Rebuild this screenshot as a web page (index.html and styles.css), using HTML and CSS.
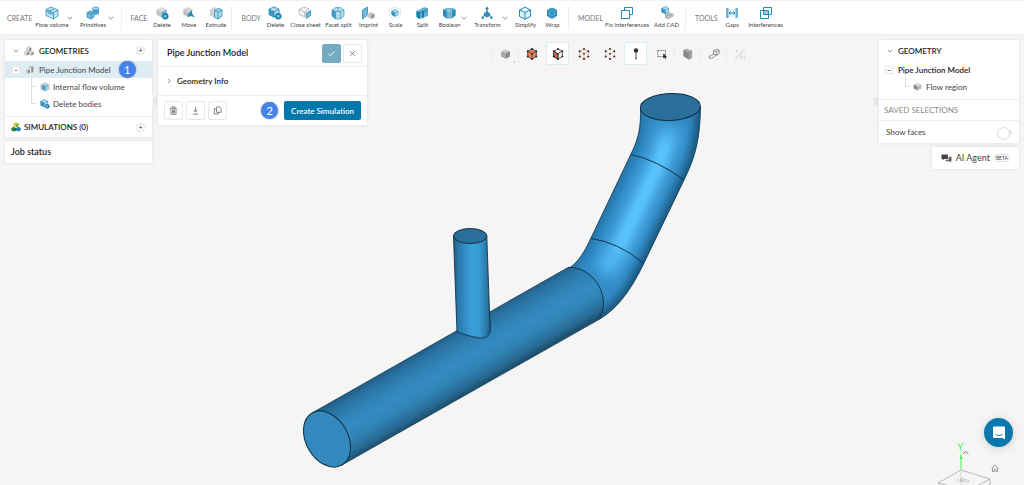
FILE: index.html
```html
<!DOCTYPE html>
<html lang="en">
<head>
<meta charset="utf-8">
<title>Pipe Junction Model</title>
<link rel="stylesheet" href="styles.css">
</head>
<body>
<svg class="defs" aria-hidden="true">
  <defs>
    <symbol id="cube" viewBox="0 0 12 12"><path d="M6 .8 11 3.2v5.4L6 11.2 1 8.6V3.2z" fill="#b9dcec"/><path d="M1 3.2 6 5.7v5.5L1 8.6z" fill="#3d9cc4"/><path d="M6 .8 11 3.2v5.4L6 11.2 1 8.6V3.2zM1 3.2 6 5.7l5-2.5M6 5.7v5.5" fill="none" stroke="#2389b5" stroke-width=".8"/></symbol>
    <symbol id="volume" viewBox="0 0 12 12"><path d="M6 .3 11.500 3v6L6 11.700.500 9V3z" fill="#c9cdd0"/><path d="m6 2 3.800 1.900v4.300L6 10.100 2.200 8.200V3.900z" fill="#9ccfe4"/><path d="M2.200 3.900 6 5.800v4.300L2.200 8.200z" fill="#4da5ca"/><path d="M2.200 3.900 6 5.800l3.800-1.900M6 5.800v4.300" fill="none" stroke="#2389b5" stroke-width=".6"/></symbol>
    <symbol id="cube-gray" viewBox="0 0 12 12"><path d="M6 .8 11 3.2v5.4L6 11.2 1 8.6V3.2z" fill="#dcdcdc"/><path d="M6 5.7 11 3.2v5.4l-5 2.6z" fill="#bcbcbc"/><path d="M1 3.2 6 5.7v5.5L1 8.6z" fill="#8c8c8c"/></symbol>
    <symbol id="chev" viewBox="0 0 6 6"><path d="M.8 1.8 3 4.2l2.2-2.4" fill="none" stroke="#777" stroke-width=".8"/></symbol>
    <symbol id="flow" viewBox="0 0 14 14"><path d="M1 3.5 6 1l7 3v6l-4.500 3L1 9.500z" fill="#c4e2ef" stroke="#3394bd" stroke-width=".8"/><path d="M1 3.500 8.500 6.800 13 4M8.500 6.800V13M3.500 5.500 9 3M3 7l3.500 1.500" fill="none" stroke="#3394bd" stroke-width=".9"/><path d="M1 3.500 8.500 6.800V9L1 6z" fill="#68b3d2"/></symbol>
    <symbol id="prims" viewBox="0 0 14 14"><path d="M6.500 2.500v5c0 1.600 6.500 1.600 6.500 0v-5z" fill="#4da5ca"/><ellipse cx="9.800" cy="2.500" rx="3.200" ry="1.500" fill="#b5daea" stroke="#2389b5" stroke-width=".7"/><path d="M1 6.500 4 5l4 1.500v4.800L5 13l-4-1.700z" fill="#79bcd7" stroke="#2389b5" stroke-width=".7"/><path d="M1 6.500 5 8l3-1.500M5 8v5" fill="none" stroke="#2389b5" stroke-width=".7"/></symbol>
    <symbol id="face-del" viewBox="0 0 14 14"><path d="M6.500 1 11.500 3.500v5l-5 3-5-3v-5z" fill="#dedede"/><path d="M1.500 3.500 6.500 6v5.500l-5-3z" fill="#c5c5c5"/><path d="M6.500 6l5-2.500v5l-5 3z" fill="#6ab3d1"/><circle cx="10.300" cy="10.300" r="3.200" fill="#1784b2"/><path d="m9.200 9.200 2.200 2.200m0-2.200-2.200 2.200" stroke="#fff" stroke-width=".8"/></symbol>
    <symbol id="face-move" viewBox="0 0 14 14"><path d="M6 1 10.500 3.200v5.300L6 11 1.500 8.500V3.200z" fill="#d6d6d6"/><path d="M1.500 3.200 6 5.500V11L1.500 8.500z" fill="#bebebe"/><path d="M6 8 10 4v3.500l3 4-4-1.500-3 1z" fill="#2389b5"/></symbol>
    <symbol id="extrude" viewBox="0 0 14 14"><path d="M5.500 1 9 2.500 5.500 6v6L1 9.500v-6z" fill="#d2d2d2"/><path d="M5.500 4.500 10 2.500l3 1.500v6l-4 3-3.500-1.500z" fill="#b5daea" stroke="#2389b5" stroke-width=".8"/><path d="M5.500 4.500 9 6l4-2M9 6v7" fill="none" stroke="#2389b5" stroke-width=".8"/></symbol>
    <symbol id="body-del" viewBox="0 0 14 14"><use href="#cube" width="12" height="12"/><circle cx="10.300" cy="10.300" r="3.200" fill="#1784b2"/><path d="m9.200 9.200 2.200 2.200m0-2.200-2.200 2.200" stroke="#fff" stroke-width=".8"/></symbol>
    <symbol id="sheet" viewBox="0 0 14 14"><path d="M1 3.500 6 1l5 2-4 3v5L1 8.500z" fill="#f1f1f1" stroke="#aaa" stroke-width=".7"/><path d="m1 3.500 6 2.500v5" fill="none" stroke="#aaa" stroke-width=".7"/><path d="m8.500 7 4-2.500v5l-4 3z" fill="#6db5d3" stroke="#2389b5" stroke-width=".7"/></symbol>
    <symbol id="facet" viewBox="0 0 14 14"><path d="M4.500 1.500h5L13 4v6l-3.500 3h-5L1 10V4z" fill="#b5daea"/><path d="M1 4 4.500 5.500v7.500L1 10z" fill="#3d9cc4"/><path d="M4.500 1.500h5L13 4v6l-3.500 3h-5L1 10V4zM1 4l3.500 1.500h5L13 4M4.500 5.500V13M9.500 5.500V13M7 1.500v4" fill="none" stroke="#3898c0" stroke-width=".7"/></symbol>
    <symbol id="imprint" viewBox="0 0 14 14"><path d="m1.500 4 5-3v8l-5 4z" fill="#72b7d4" stroke="#2389b5" stroke-width=".8"/><path d="m10 6 3.500 1.700v3.600L10 13l-3.500-1.700V7.700z" fill="#c9c9c9"/><path d="M10 9.300 13.500 7.700v3.600L10 13z" fill="#9b9b9b"/></symbol>
    <symbol id="scale" viewBox="0 0 14 14"><path d="M7 .8 12.500 3.800v6.400L7 13.200 1.500 10.200V3.800z" fill="none" stroke="#90c5dc" stroke-width=".6" stroke-dasharray="1.500 1"/><use href="#cube" x="3" y="3" width="8" height="8"/></symbol>
    <symbol id="split" viewBox="0 0 14 14"><path d="m1.500 5 8-4L13 2.500V10l-8 3-3.500-2z" fill="#67b1d1"/><path d="m1.500 5 3.500 1.500V13l-3.500-2zM7 5.500v7L9 11V4z" fill="#187ca8"/><path d="M5 6.500 13 2.500M1 7.500l11.500-2" stroke="#1c82ad" stroke-width=".8"/></symbol>
    <symbol id="bool" viewBox="0 0 14 14"><path d="M1 3.500 4.500 2h6L13.500 3.500v6L9.500 12.500h-5L1 9.500z" fill="#5babd0"/><path d="M1 3.500 4.500 5v7.500L1 9.500zM9.500 5l4-1.500v6l-4 3z" fill="#2b8cb8"/><path d="M4.500 5h5v7.500M7 5v7M4.500 2l5 3M9.500 2l-5 3" fill="none" stroke="#b5daea" stroke-width=".6"/></symbol>
    <symbol id="trans" viewBox="0 0 14 14"><path d="M7 .5 9 3H7.700v3.500H6.300V3H5z" fill="#2389b5"/><path d="m7 5.500 3 1.500v3L7 11.500 4 10V7z" fill="#338fb9"/><path d="m4 9-3 2.500 1.500.8L1 13h3l-.5-1.500M10 9l3 2.500-1.500.8L13 13h-3l.5-1.500" fill="#2389b5"/></symbol>
    <symbol id="simple" viewBox="0 0 14 14"><path d="m7 1 5.500 3v6.500L7 13.200 1.500 10.500V4z" fill="#e1f1f8" stroke="#2389b5"/><path d="M1.500 4 7 6.500 12.500 4M7 6.500v6.700" fill="none" stroke="#2389b5"/></symbol>
    <symbol id="wrap" viewBox="0 0 14 14"><path d="M7 1.500 12 4v6l-5 3-5-3V4z" fill="#278bb8"/><path d="m2 4 5 2.500L12 4M7 6.500V13M4.500 2.800l5 2.500v6M9.500 2.800l-5 2.500v6M2 7l5 2.500L12 7" fill="none" stroke="#8ac5de" stroke-width=".4"/></symbol>
    <symbol id="fix" viewBox="0 0 14 14"><path d="M4.500 4.500v-3h8v7h-3M1.500 4.500h8v8h-8z" fill="none" stroke="#2389b5"/></symbol>
    <symbol id="cad" viewBox="0 0 14 14"><path d="m5 8 4-2 4.500 2v2.500L8 13.500l-3-1.500z" fill="#bdbdbd"/><path d="m5 8 3 1.700 5.500-1.700" fill="none" stroke="#999" stroke-width=".6"/><use href="#cube" x="1" y="0" width="8.500" height="8.500"/></symbol>
    <symbol id="gaps" viewBox="0 0 14 14"><path d="M1.500 2h2.500v10H1.500zM12.500 2H10v10h2.500z" fill="#a9d3e5"/><path d="M4 3h6v8H4z" fill="#e3f1f7"/><path d="M2 2v10M12 2v10M4 7h6M5.500 5.500 4 7l1.500 1.500M8.500 5.500 10 7 8.500 8.500" fill="none" stroke="#2389b5"/></symbol>
    <symbol id="inter" viewBox="0 0 14 14"><path d="M4.500 4.500h5v4h-5z" fill="#99cbe0"/><path d="M4.500 1.500h8v7h-8z M1.500 4.500h8v8h-8z" fill="none" stroke="#2389b5"/></symbol>
    <symbol id="sims" viewBox="0 0 12 12"><path d="m6 .3 3 1.500v3L6 6.200 3 4.800v-3z" fill="#d9c62c"/><path d="m3.200 5.600 2.800 1.500v3l-2.800 1.400L.3 10.100v-3z" fill="#348f45"/><path d="m8.900 5.600 2.800 1.500v3l-2.800 1.400L6 10.100v-3z" fill="#277fae"/><path d="M6 3.300 9 1.800v3L6 6.200z" fill="#6fae3c"/><path d="m3.200 8.600 2.800-1.500v3l-2.800 1.400z" fill="#235f3c"/></symbol>
    <symbol id="geoms" viewBox="0 0 12 12"><path d="M6 .8l2.600 1.300v2.800L6 6.200 3.400 4.900V2.100zM3.300 5.800l2.500 1.300v2.800l-2.500 1.300L.8 9.900V7.100zM8.800 5.800l2.500 1.300v2.800l-2.500 1.300-2.500-1.300V7.100z" fill="#e3e3e3" stroke="#999" stroke-width=".6"/><path d="M6 3.300 8.600 2.100v2.800L6 6.200zM3.300 8.400l2.500-1.300v2.800l-2.500 1.300zM8.800 8.400l2.500-1.300v2.800l-2.500 1.300z" fill="#888"/></symbol>
    <symbol id="part" viewBox="0 0 12 12"><path d="M1 6.500 4 5l2.500 1V10L4 11.200 1 10zM3.500 2.500 8 .8l3 1.200v7L8.500 10.500V5L6 4z" fill="#c8c8c8"/><path d="m4 7.500 2.500-1.500v4L4 11.200zM8.500 3 11 2v7l-2.500 1.500z" fill="#888"/></symbol>
    <symbol id="hex" viewBox="0 0 14 14"><path d="m7 1 5 2.800v6L7 13 2 9.800v-6z"/><path d="m2 3.800 5 2.900 5-2.900M7 6.700V13"/><g class="dots"><circle cx="7" cy="1.200" r="1.100"/><circle cx="12" cy="3.800" r="1.100"/><circle cx="12" cy="9.900" r="1.100"/><circle cx="7" cy="12.800" r="1.100"/><circle cx="2" cy="9.900" r="1.100"/><circle cx="2" cy="3.800" r="1.100"/><circle cx="7" cy="6.800" r="1.100"/></g></symbol>
  </defs>
</svg>

<header class="toolbar">
  <section class="group create">
    <h2 class="group-name">CREATE</h2>
    <button class="tool wide"><svg><use href="#flow"/></svg>Flow volume</button><button class="more" aria-label="More flow volume tools"><svg><use href="#chev"/></svg></button>
    <button class="tool wide"><svg><use href="#prims"/></svg>Primitives</button><button class="more" aria-label="More primitives"><svg><use href="#chev"/></svg></button>
  </section>
  <section class="group">
    <h2 class="group-name">FACE</h2>
    <button class="tool"><svg><use href="#face-del"/></svg>Delete</button>
    <button class="tool"><svg><use href="#face-move"/></svg>Move</button>
    <button class="tool"><svg><use href="#extrude"/></svg>Extrude</button>
  </section>
  <section class="group">
    <h2 class="group-name">BODY</h2>
    <button class="tool"><svg><use href="#body-del"/></svg>Delete</button>
    <button class="tool wide"><svg><use href="#sheet"/></svg>Close sheet</button>
    <button class="tool wide"><svg><use href="#facet"/></svg>Facet split</button>
    <button class="tool"><svg><use href="#imprint"/></svg>Imprint</button>
    <button class="tool"><svg><use href="#scale"/></svg>Scale</button>
    <button class="tool"><svg><use href="#split"/></svg>Split</button>
    <button class="tool"><svg><use href="#bool"/></svg>Boolean</button><button class="more" aria-label="More boolean tools"><svg><use href="#chev"/></svg></button>
    <button class="tool wide"><svg><use href="#trans"/></svg>Transform</button><button class="more" aria-label="More transforms"><svg><use href="#chev"/></svg></button>
    <button class="tool"><svg><use href="#simple"/></svg>Simplify</button>
    <button class="tool"><svg><use href="#wrap"/></svg>Wrap</button>
  </section>
  <section class="group">
    <h2 class="group-name">MODEL</h2>
    <button class="tool widest"><svg><use href="#fix"/></svg>Fix interferences</button>
    <button class="tool wide"><svg><use href="#cad"/></svg>Add CAD</button>
  </section>
  <section class="group">
    <h2 class="group-name">TOOLS</h2>
    <button class="tool"><svg><use href="#gaps"/></svg>Gaps</button>
    <button class="tool wider"><svg><use href="#inter"/></svg>Interferences</button>
  </section>
</header>

<main class="workspace">
  <svg class="scene" viewBox="0 35 1024 450" preserveAspectRatio="xMidYMid slice" role="img" aria-label="3D pipe junction">
    <defs>
      <linearGradient id="run" gradientUnits="userSpaceOnUse" x1="312" y1="413" x2="342" y2="465">
        <stop offset="0" stop-color="#215a80"/><stop offset=".1" stop-color="#286e9c"/><stop offset=".3" stop-color="#3081b5"/><stop offset=".5" stop-color="#338bc2"/><stop offset=".7" stop-color="#3083b6"/><stop offset=".9" stop-color="#286a94"/><stop offset="1" stop-color="#1e506f"/>
      </linearGradient>
      <linearGradient id="branch" x1="0" x2="1" y1="0" y2="0">
        <stop offset="0" stop-color="#1f5a80"/><stop offset=".12" stop-color="#2978aa"/><stop offset=".5" stop-color="#3ca0da"/><stop offset=".7" stop-color="#3899d2"/><stop offset=".9" stop-color="#2977a8"/><stop offset="1" stop-color="#205a7f"/>
      </linearGradient>
      <clipPath id="tube"><path d="M570 267.500C578 262 584 253 591 238L631 154C639 138 641 126 640.500 107H700.500C700 138 696 156 684 180L644 263C632 288 618 309 598 320L580 300z"/></clipPath>
      <filter id="edge" filterUnits="userSpaceOnUse" x="520" y="60" width="230" height="300"><feGaussianBlur stdDeviation="4"/></filter>
      <filter id="glow" filterUnits="userSpaceOnUse" x="520" y="60" width="230" height="300"><feGaussianBlur stdDeviation="7"/></filter>
    </defs>
    <g clip-path="url(#tube)">
      <path d="M540 80h170v250H540z" fill="#338bc5"/>
      <path d="M604 273 620 246 658 165Q667 145 669 128" fill="none" stroke="#50b8f5" stroke-width="22" filter="url(#glow)"/>
      <path d="M617 252 662 157 665 142" fill="none" stroke="#5fc8ff" stroke-width="9" filter="url(#edge)"/>
      <path d="M568 269C578 262 584 253 591 238L631 154C639 138 641 126 640.500 104" fill="none" stroke="#1f6795" stroke-width="6" filter="url(#edge)"/>
      <path d="M700.500 100C700 138 696 156 684 180L644 263C632 288 618 309 596 321" fill="none" stroke="#174d70" stroke-width="9" filter="url(#edge)"/>
    </g>
    <g fill="none" stroke="#12334a">
      <path d="M570 267.500C578 262 584 253 591 238L631 154C639 138 641 126 640.500 107M700.500 107C700 138 696 156 684 180L644 263C632 288 618 309 598 320" stroke-width=".8"/>
      <path d="M591 238.500Q618 242 644 263.500M631 154.500Q657 160 684 180"/>
    </g>
    <path d="M312 413 568 267.500C586 266 603 283 603.500 303Q603 316 598 320L342 465z" fill="url(#run)"/>
    <path d="M312 413 568 267.500M598 320 342 465" fill="none" stroke="#17425c" stroke-width=".8"/>
    <path d="M568 267.500C586 266 603 283 603.500 303Q603 316 598 320" fill="none" stroke="#12334a"/>
    <ellipse cx="327" cy="439" rx="30" ry="21" transform="rotate(60.300 327 439)" fill="#3388bd" stroke="#102f42"/>
    <ellipse cx="670.300" cy="107" rx="30" ry="13.500" transform="rotate(-2 670 107)" fill="#2a6f99" stroke="#102f42"/>
    <path d="M453.500 236 457 332Q468 336 480 338.300 491 338 490.500 328L489.500 313 486.800 236z" fill="url(#branch)"/>
    <path d="M453.500 236 457 332Q468 336 480 338.300 491 338 490.500 328L489.500 313 486.800 236" fill="none" stroke="#12334a" stroke-width=".9"/>
    <ellipse cx="470.200" cy="236" rx="16.700" ry="7.500" fill="#2a6f99" stroke="#102f42"/>
  </svg>

  <div class="left">
    <section class="panel">
      <div class="row head">
        <svg class="i6"><use href="#chev"/></svg><svg class="i10"><use href="#geoms"/></svg>
        <h1 class="grow title">GEOMETRIES</h1><button class="add" aria-label="Add geometry">+</button>
      </div>
      <div class="row selected"><button class="fold" aria-label="Collapse">−</button><svg class="i8"><use href="#part"/></svg><span>Pipe Junction Model</span><span class="badge">1</span></div>
      <div class="row child"><svg class="i10"><use href="#volume"/></svg>Internal flow volume</div>
      <div class="row child last"><svg class="i10"><use href="#body-del"/></svg>Delete bodies</div>
      <div class="row head sims"><svg class="i10"><use href="#sims"/></svg><h1 class="grow title">SIMULATIONS (0)</h1><button class="add" aria-label="Add simulation">+</button></div>
    </section>
    <section class="panel job">Job status</section>
  </div>
  <div class="handle"></div>
  <section class="panel props">
    <div class="props-head"><h1 class="grow props-title">Pipe Junction Model</h1>
      <button class="sq apply" aria-label="Apply"><svg viewBox="0 0 10 10"><path d="m1.500 5.200 2.300 2.300 4.700-4.800"/></svg></button>
      <button class="sq" aria-label="Close"><svg viewBox="0 0 10 10"><path d="m2.500 2.500 5 5m0-5-5 5"/></svg></button></div>
    <button class="info"><svg class="i6 turned"><use href="#chev"/></svg>Geometry Info</button>
    <div class="props-foot">
      <button class="sq" aria-label="Delete"><svg viewBox="0 0 10 10"><path d="M1.500 2.500h7M3.500 2.500V1h3v1.500M2.200 2.500v6.700h5.600V2.500M4 4v4M5 4v4M6 4v4"/></svg></button>
      <button class="sq" aria-label="Download"><svg viewBox="0 0 10 10"><path d="M5 1v5.500M3 4.700l2 2 2-2M2 9h6"/></svg></button>
      <button class="sq" aria-label="Copy"><svg viewBox="0 0 10 10"><path d="M4 1h3.200L9 2.500v4.500H4zM4 3H1.500v6H6V7"/></svg></button>
      <span class="badge step">2</span>
      <button class="primary">Create Simulation</button>
    </div>
  </section>

  <nav class="view-tools" aria-label="View tools">
    <button class="vt sep" aria-label="Shading"><svg viewBox="0 0 14 14"><path d="m6.500 1.500 5 2.500v6l-5 2.500-5-2.500V4z" fill="#c4c4c4"/><path d="m6.500 6.500 5-2.500v6l-5 2.500z" fill="#888"/><path d="m1.500 4 5 2.500v6l-5-2.500z" fill="#a6a6a6"/></svg><span class="corner"></span></button>
    <button class="vt vol" aria-label="Select volumes"><svg><use href="#hex"/></svg></button>
    <button class="vt on face" aria-label="Select faces"><svg viewBox="0 0 14 14"><path d="m2 3.800 5 2.900V13L2 9.800z" fill="#e5622d"/><use href="#hex"/></svg></button>
    <button class="vt node" aria-label="Select nodes"><svg><use href="#hex"/></svg></button>
    <button class="vt off" aria-label="Select edges"><svg><use href="#hex"/></svg></button>
    <button class="vt on" aria-label="Pick point"><svg viewBox="0 0 14 14"><circle cx="7" cy="3" r="2.600" fill="#333"/><path d="M7 5v7" stroke="#333"/><circle cx="7" cy="12.300" r=".9" fill="#333"/></svg></button>
    <button class="vt" aria-label="Box select"><svg viewBox="0 0 14 14"><path d="M2 3h9v7H2z" fill="none" stroke="#555" stroke-dasharray="2 1"/><path d="m8.500 6.500 4.500 4-2 .2 1 2-1 .5-1-2-1.500 1z" fill="#222"/></svg></button>
    <button class="vt sep" aria-label="Section cut"><svg viewBox="0 0 14 14"><path d="m2 2.500 3-1.300 6.500 2.300v7.500L8.500 13.500 2 9.500z" fill="#b3b3b3" stroke="#8c8c8c" stroke-width=".6"/><path d="m2 2.500 6.500 2.500v8.500L2 9.500z" fill="#8a8a8a"/><path d="M8.500 5l3-1.500M10 4.500v8" fill="none" stroke="#777" stroke-width=".6"/></svg></button>
    <button class="vt sep" aria-label="Measure"><svg viewBox="0 0 14 14"><path d="M6.500 3.500 9.500 1.500 13 2.500v4L10 8.500 6.500 7.500zM6.500 3.500l3.500 1 3-2M10 4.500v4M6.500 6.500Q4 9 1 10l1 2.500Q7 11.500 9 8.500" fill="none" stroke="#777" stroke-width=".9"/></svg></button>
    <button class="vt" aria-label="AI tools"><svg viewBox="0 0 14 14"><path d="m1.500 12 7.500-8 1.300 1.300-7.500 8zM3 2v3M1.500 3.500h3M11.500 1.500v2M10.500 2.500h2M7.500 13l1.500-4 1.500 4M12.500 9v4" fill="none" stroke="#cdcdcd" stroke-width=".9"/></svg></button>
  </nav>

  <div class="handle"></div>
  <div class="right">
    <section class="panel">
      <div class="row head"><svg class="i6"><use href="#chev"/></svg><h1 class="title">GEOMETRY</h1></div>
      <div class="row rmodel"><button class="fold" aria-label="Collapse">−</button><b>Pipe Junction Model</b></div>
      <div class="row child last region"><svg class="i8"><use href="#cube-gray"/></svg>Flow region</div>
      <div class="row saved">SAVED SELECTIONS</div>
      <label class="row faces"><span class="grow">Show faces</span><input class="switch" type="checkbox"></label>
    </section>
    <button class="agent"><svg viewBox="0 0 12 12"><path d="M.5 1.500h7v5h-4L2 8V6.500H.5z" fill="#444"/><path d="M8.300 4h3.200v5h-1v1.500L8.800 9H5V7.300h3.300z" fill="#666"/></svg>AI Agent <span class="beta">BETA</span></button>
  </div>

  <svg class="axes" viewBox="0 0 70 45" role="img" aria-label="Orientation cube">
    <path d="M1 43 24 30 53 39v6M1 43l16 4M53 39 38 47" fill="none" stroke="#aaa" stroke-width=".8"/>
    <path d="M24 30V17" stroke="#54ef54"/><path d="m24 13 1.500 6h-3z" fill="#54ef54"/>
    <path d="M24 30v15" stroke="#cfd8cf"/>
    <text x="20" y="11" class="axis-name">Y</text>
    <path d="m26 14 2.700-2.500 2.700 2.500" fill="none" stroke="#777"/>
    <text x="20" y="41" class="cube-name" transform="rotate(12 20 41)">LEFT</text>
    <path d="m54.500 28.500 3.500-3.500 3.500 3.500M55.500 28v3.500h1.700v-2.200h1.600v2.200h1.700V28" fill="none" stroke="#888" stroke-width=".8"/>
  </svg>
  <button class="chat" aria-label="Open chat"><svg viewBox="0 0 14 14"><path d="M2 .5h10q1 0 1 1v12L10.500 12H2q-1 0-1-1V1.500q0-1 1-1z" fill="#fff"/><path d="M3.500 8.500q3.500 2.500 7 0" fill="none" stroke="#0a78ac" stroke-width=".9"/></svg></button>
</main>
</body>
</html>
```
FILE: styles.css
```css
* { box-sizing: border-box; }
body {
  margin: 0;
  min-height: 100vh;
  display: flex;
  flex-direction: column;
  background: #f5f5f5;
  color: #444;
  font: 8px/10px Lato, sans-serif;
}
button { margin: 0; padding: 0; border: 0; background: none; color: inherit; font: inherit; }
h1, h2 { margin: 0; font: inherit; }
svg { display: block; flex: none; }
.defs { position: absolute; width: 0; height: 0; }
.grow { flex: 1; text-align: left; }

.toolbar {
  display: flex;
  align-items: center;
  min-height: 35px;
  background: #fff;
  border-top: 1px solid #f3f3f3;
  border-bottom: 1px solid #ececec;
}
.group { display: flex; align-items: center; height: 24px; padding: 0 2px 0 9px; border-left: 1px solid #eee; }
.create { padding: 0 3px 0 7px; border-left: 0; }
.group-name { margin-right: 1px; font-size: 7px; color: #777; }
.create .group-name { margin-right: 3px; }
.tool { display: flex; flex-direction: column; align-items: center; gap: 1px; width: 27px; font-size: 6px; line-height: 8px; white-space: nowrap; }
.tool svg { width: 14px; height: 14px; }
.wide { width: 33px; }
.wider { width: 40px; }
.widest { width: 46px; }
.more { margin: 0 4px 0 -2px; }
.more svg, .i6 { width: 6px; height: 6px; }
.i8 { width: 9px; height: 9px; }
.i10 { width: 10px; height: 10px; }

.workspace { position: relative; flex: 1; display: flex; align-items: flex-start; padding: 5px 5px 0; overflow: hidden; }
.scene { position: absolute; inset: 0; width: 100%; height: 100%; }
.left, .right, .props, .view-tools, .handle { position: relative; }
.left { width: 147px; display: flex; flex-direction: column; gap: 4px; }
.panel { background: #fff; box-shadow: 0 0 3px #ddd; }
.row { display: flex; align-items: center; height: 17px; white-space: nowrap; }
.head { height: 21px; padding: 0 7px 0 8px; gap: 5px; }
.title { font-weight: 600; color: #222; }
.add { width: 9px; height: 9px; border: 1px solid #ddd; border-radius: 50%; font-size: 8px; line-height: 7px; }
.selected { padding-left: 7px; gap: 5px; background: #deedf4; }
.fold { width: 8px; height: 8px; background: #fff; border: 1px solid #e8e8e8; font-size: 7px; line-height: 6px; }
.badge {
  width: 17px;
  height: 17px;
  margin-left: 3px;
  border-radius: 50%;
  background: #4582ea;
  box-shadow: 0 0 2px #888;
  color: #fff;
  font-size: 11px;
  line-height: 17px;
  text-align: center;
}
.child { position: relative; padding-left: 35px; gap: 3px; }
.child::before { content: ""; position: absolute; left: 26px; top: 0; bottom: 0; width: 4px; border-left: 1px solid #ddd; background: linear-gradient(#ddd, #ddd) 0 8px / 4px 1px no-repeat; }
.last::before { bottom: 8px; }
.last { margin-bottom: 4px; }
.sims { padding-left: 6px; gap: 3px; border-top: 1px solid #eee; }
.job { padding: 6px; color: #222; font-size: 9px; font-weight: 600; }
.handle { width: 6px; height: 10px; margin-top: 56px; border: 1px solid #f5f5f5; background: #e6e6e6; }

.props { width: 209px; }
.props-head { display: flex; align-items: center; gap: 2px; height: 26px; padding: 0 5px 0 9px; }
.props-title { color: #222; font-size: 9px; font-weight: 600; }
.sq { display: flex; align-items: center; justify-content: center; width: 19px; height: 19px; border: 1px solid #e8e8e8; border-radius: 2px; background: #fff; }
.sq svg { width: 9px; height: 9px; fill: none; stroke: #777; stroke-width: 1; }
.apply { border-color: #75aac2; background: #75aac2; }
.apply svg { stroke: #fff; }
.info { display: flex; align-items: center; gap: 5px; width: 100%; height: 30px; padding-left: 8px; border: solid #eee; border-width: 1px 0; color: #222; font-weight: 600; }
.turned { transform: rotate(-90deg); }
.props-foot { display: flex; align-items: center; gap: 3px; height: 29px; padding: 0 6px; }
.step { margin: 0 3px 0 auto; }
.primary { height: 19px; padding: 0 7px; border-radius: 2px; background: #0277ab; color: #fff; font-weight: 600; }

.view-tools { flex: 1; display: flex; justify-content: center; gap: 3px; padding: 2px 0 0 5px; }
.vt { position: relative; display: flex; align-items: center; justify-content: center; width: 23px; height: 23px; border: 1px solid transparent; border-radius: 2px; }
.vt svg { width: 12px; height: 12px; }
.on { border-color: #d9ebf5; background: #fff; }
.sep::before, .sep::after { content: ""; position: absolute; top: 2px; bottom: 2px; left: -3px; width: 1px; background: #ececec; }
.sep::after { left: auto; right: -3px; }
.corner { position: absolute; right: 1px; bottom: 1px; border: 1px solid #bbb; border-top-color: transparent; border-left-color: transparent; }
.vol svg { fill: #ef8356; stroke: #444; }
.face svg, .node svg, .off svg { fill: none; stroke: #444; }
.node svg { stroke: #efa78a; }
.off svg { stroke: #efc9bb; }
.dots { fill: #222; stroke: none; }
.off .dots { fill: #efc9bb; }

.right { width: 140px; display: flex; flex-direction: column; align-items: flex-end; gap: 4px; }
.right .panel { width: 100%; }
.rmodel { padding-left: 6px; gap: 5px; color: #222; }
.rmodel b { font-weight: 600; }
.region { padding-left: 34px; gap: 4px; }
.saved { height: 22px; padding-left: 5px; border: solid #eee; border-width: 1px 0; color: #888; }
.faces { height: 22px; padding: 0 7px; }
.switch { position: relative; appearance: none; width: 14px; height: 5px; margin: 0; border-radius: 3px; background: #e6e6e6; }
.switch::before { content: ""; position: absolute; left: -1px; top: -3px; width: 11px; height: 11px; border: 1px solid #ddd; border-radius: 50%; background: #fff; }
.agent { display: flex; align-items: center; gap: 4px; height: 22px; padding: 0 9px; background: #fff; box-shadow: 0 0 3px #ddd; font-size: 9px; }
.agent svg { width: 11px; height: 11px; }
.beta { padding: 0 1px; border: 1px solid #ddd; border-radius: 4px; font-size: 5px; line-height: 6px; }

.axes { position: absolute; right: 17px; bottom: 0; width: 70px; height: 45px; }
.axis-name { fill: #54ef54; font: 10px "Liberation Sans", sans-serif; }
.cube-name { fill: #999; font: 5px "Liberation Sans", sans-serif; }
.chat { position: absolute; right: 11px; bottom: 38px; display: flex; align-items: center; justify-content: center; width: 29px; height: 29px; border-radius: 50%; background: #0a78ac; box-shadow: 0 1px 8px #ccc; }
.chat svg { width: 14px; height: 14px; }
```
